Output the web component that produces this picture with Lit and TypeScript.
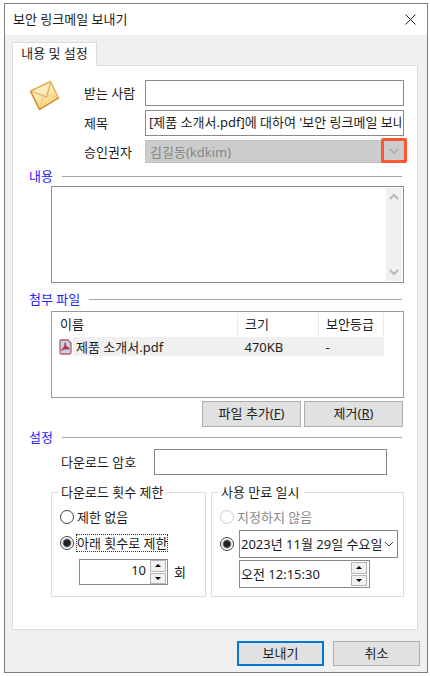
import { LitElement, html, css, svg } from "lit";
import { customElement, state } from "lit/decorators.js";

const envelope = svg`
  <defs>
    <linearGradient id="paper" x1="0" y1="0" x2="0.5" y2="1">
      <stop offset="0" stop-color="#fff6d8" />
      <stop offset="0.5" stop-color="#feeab4" />
      <stop offset="1" stop-color="#f8cf72" />
    </linearGradient>
  </defs>
  <path d="M1.5 11 L21.5 1.5 L29.5 18 L10.5 29.5 Z" fill="url(#paper)" stroke="#e6ae50" stroke-width="1.4" stroke-linejoin="round"/>
  <path d="M1.5 11 L10.5 29.5 L29.5 18" fill="none" stroke="#c98a3a" stroke-width="1.3" stroke-linejoin="round"/>
  <path d="M3 11.5 L17.5 17 L21.5 3" fill="none" stroke="#d9ab6c" stroke-width="1.2"/>
  <path d="M11 28 L14 16 M28 17.5 L18.5 15" fill="none" stroke="#edc98a" stroke-width="1"/>`;

@customElement("app-root")
export class AppRoot extends LitElement {
  @state() private limited = true;

  static styles = css`
    :host {
      display: block;
      box-sizing: border-box;
      padding: 3px 2px 3px 4px;
      background: #fff;
      color: #1c1c1c;
      font: 13px/18px "Noto Sans", "Noto Sans CJK KR", sans-serif;
    }
    *, *::before, *::after { box-sizing: border-box; }
    input, textarea, select, button {
      font: inherit;
      color: inherit;
      margin: 0;
      border-radius: 0;
      outline: none;
    }
    svg { display: block; }
    .window { border: 1px solid #7c7c7c; background: #f0f0f0; }
    .titlebar {
      display: flex;
      justify-content: space-between;
      align-items: center;
      height: 31px;
      padding: 0 11px 2px 8px;
      background: #fff;
    }
    .titlebar h1 { margin: 0; font: inherit; }
    .close { padding: 2px 0 0; border: 0; background: none; }
    .body { padding: 7px 9px 0 7px; }
    .tab {
      display: block;
      position: relative;
      z-index: 1;
      width: 85px;
      height: 24px;
      margin-bottom: -1px;
      padding: 0 0 4px;
      border: 1px solid #dcdcdc;
      border-bottom: 0;
      background: #fff;
    }
    .panel {
      padding: 14px 13px 32px 16px;
      border: 1px solid #dcdcdc;
      background: #fff;
    }
    .form {
      display: grid;
      grid-template-columns: 55px 61px 1fr;
      row-gap: 4px;
      align-items: center;
    }
    .mail { grid-row: span 3; align-self: start; }
    .field {
      width: 100%;
      min-width: 0;
      height: 26px;
      padding: 0 2px 4px 3px;
      border: 1px solid #8a8a8a;
      background: #fff;
    }
    .picker { position: relative; height: 23px; }
    .picker select {
      display: block;
      appearance: none;
      width: 100%;
      height: 23px;
      padding: 0 4px;
      border: 1px solid #c2c2c2;
      background: #ccc;
      color: #858585;
      opacity: 1;
    }
    .picker .mark {
      position: absolute;
      top: -2px;
      right: -3px;
      display: grid;
      place-items: center;
      width: 26px;
      height: 25px;
      border: 3px solid #ff5630;
      border-radius: 2px;
      pointer-events: none;
    }
    .heading {
      display: flex;
      align-items: center;
      gap: 9px;
      height: 20px;
      margin: 0 2px 0 0;
      font: inherit;
      color: #1f1fff;
    }
    .heading::after { content: ""; flex: 1; height: 1px; background: #a8a8a8; }
    .first { margin-top: 3px; }
    .second { margin-top: 6px; margin-bottom: 2px; }
    .third { margin-bottom: 2px; }
    .indent { margin-left: 22px; }
    .editor {
      display: flex;
      height: 97px;
      padding: 1px;
      border: 1px solid #8f8f8f;
    }
    .editor textarea { flex: 1; min-width: 0; border: 0; resize: none; overflow: hidden; }
    .scroll {
      display: flex;
      flex-direction: column;
      justify-content: space-between;
      align-items: center;
      width: 16px;
      padding: 3px 0;
      background: #f0f0f0;
    }
    .list { height: 87px; padding: 1px 19px 0 7px; border: 1px solid #9b9ba8; }
    table { width: 100%; border-collapse: collapse; table-layout: fixed; }
    th, td { padding: 0 0 0 7px; font-weight: inherit; text-align: left; white-space: nowrap; }
    th { height: 24px; padding-bottom: 2px; border-right: 1px solid #e8e8e8; }
    th:first-child { padding-left: 1px; }
    td { height: 19px; background: #f0f0f0; }
    td:first-child { padding: 0; background: linear-gradient(90deg, #fff 14px, #f0f0f0 14px); }
    .size { width: 81px; }
    .grade { width: 65px; }
    .file { display: flex; align-items: center; gap: 4px; }
    .actions { display: flex; justify-content: flex-end; gap: 3px; margin-top: 3px; padding-right: 1px; }
    .btn {
      width: 87px;
      height: 25px;
      padding: 0 0 2px;
      border: 1px solid #adadad;
      background: #e1e1e1;
    }
    .actions .btn { width: 99px; height: 26px; }
    .btn.primary { border: 2px solid #0078d7; }
    .password {
      display: grid;
      grid-template-columns: 93px 1fr;
      align-items: center;
      padding: 0 17px 0 32px;
    }
    .groups { display: grid; grid-template-columns: 155fr 193fr; gap: 5px; margin-top: 8px; }
    fieldset { min-width: 0; height: 114px; margin: 0; padding: 7px 5px 0 8px; border: 1px solid #dcdcdc; }
    legend { padding: 0 4px 0 2px; margin-left: -1px; }
    .option { display: flex; align-items: center; gap: 2px; height: 18px; }
    .option + .option { margin-top: 8px; }
    .option label { line-height: 16px; border: 1px solid transparent; white-space: nowrap; }
    .focus label { border: 1px dotted #333; }
    .off label { color: #888; }
    input[type="radio"] {
      appearance: none;
      flex: none;
      width: 14px;
      height: 14px;
      border: 1px solid #444;
      border-radius: 50%;
      background: #fff;
    }
    input[type="radio"]:checked { background: radial-gradient(circle, #222 3px, #fff 5px); }
    input[type="radio"]:disabled { border-color: #ccc; }
    .count { display: flex; align-items: center; gap: 6px; margin: 7px 0 0 19px; }
    .box {
      display: flex;
      align-items: center;
      width: 89px;
      height: 26px;
      padding-right: 1px;
      border: 1px solid #8a8a8a;
      background: #fff;
    }
    .box input { flex: 1; width: 0; min-width: 0; height: 22px; padding: 0 0 2px 1px; border: 0; background: none; }
    .box.count-box input { padding: 0 4px 4px 0; text-align: right; }
    .spin { display: grid; width: 16px; height: 24px; gap: 1px; }
    .spin button { display: grid; place-items: center; padding: 0; border: 1px solid #b5b5b5; background: #f0f0f0; }
    .when { display: grid; grid-template-columns: 14px 1fr; column-gap: 5px; row-gap: 2px; margin-top: 4px; align-items: center; }
    .box.date { width: 100%; height: 28px; padding-right: 2px; }
    .box.time { grid-column: 2; width: 131px; height: 28px; padding-right: 2px; }
    .drop { padding: 0; border: 0; background: none; }
    .footer { display: flex; justify-content: flex-end; gap: 9px; padding: 11px 7px 6px; }
  `;

  private chevron(color: string, up = false, weight = 1) {
    return html`<svg width="12" height="12" viewBox="0 0 12 12" aria-hidden="true">
      <path d=${up ? "M2 8 L6 4 L10 8" : "M2 4 L6 8 L10 4"} fill="none" stroke=${color} stroke-width=${weight} />
    </svg>`;
  }

  private spinner() {
    return html`<span class="spin">
      <button aria-label="증가"><svg width="6" height="3"><path d="M0 3 L3 0 L6 3Z" /></svg></button>
      <button aria-label="감소"><svg width="6" height="3"><path d="M0 0 L3 3 L6 0Z" /></svg></button>
    </span>`;
  }

  render() {
    return html`
      <main class="window">
        <header class="titlebar">
          <h1>보안 링크메일 보내기</h1>
          <button class="close" aria-label="닫기">
            <svg width="11" height="11"><path d="M.5 .5 L10.5 10.5 M10.5 .5 L.5 10.5" stroke="#222" /></svg>
          </button>
        </header>
        <div class="body">
          <button class="tab">내용 및 설정</button>
          <section class="panel">
            <div class="form">
              <svg class="mail" width="31" height="32" viewBox="0 0 31 32" aria-hidden="true">${envelope}</svg>
              <label for="to">받는 사람</label>
              <input class="field" id="to" type="text" />
              <label for="subject">제목</label>
              <input class="field" id="subject" type="text" .value=${"[제품 소개서.pdf]에 대하여 '보안 링크메일 보내기'"} />
              <label for="approver">승인권자</label>
              <div class="picker">
                <select id="approver" disabled><option>김길동(kdkim)</option></select>
                <span class="mark">${this.chevron("#a5a5a5", false, 1.4)}</span>
              </div>
            </div>

            <h2 class="heading first">내용</h2>
            <div class="editor indent">
              <textarea aria-label="내용"></textarea>
              <span class="scroll">
                ${this.chevron("#b8b8b8", true, 2)}${this.chevron("#b8b8b8", false, 2)}
              </span>
            </div>

            <h2 class="heading second">첨부 파일</h2>
            <div class="list indent">
              <table>
                <thead>
                  <tr><th>이름</th><th class="size">크기</th><th class="grade">보안등급</th></tr>
                </thead>
                <tbody>
                  <tr>
                    <td>
                      <span class="file">
                        <svg width="13" height="16" viewBox="0 0 13 16" aria-hidden="true">
                          <path d="M2 1 H9 L12 4 V13.5 Q12 15 10.5 15 H2.5 Q1 15 1 13.5 V2 Q1 1 2 1Z" fill="#b9d7ee" stroke="#c25562" stroke-width="1.3" />
                          <path d="M6.2 4.2 V7 L4 10.2 M6.2 7 L9.3 9.4 M3 11 L4.6 9.4 L9.8 9.6" fill="none" stroke="#c42f44" stroke-width="1.6" stroke-linecap="round" stroke-linejoin="round" />
                        </svg>
                        제품 소개서.pdf
                      </span>
                    </td>
                    <td>470KB</td>
                    <td>-</td>
                  </tr>
                </tbody>
              </table>
            </div>
            <div class="actions">
              <button class="btn">파일 추가(<u>F</u>)</button>
              <button class="btn">제거(<u>R</u>)</button>
            </div>

            <h2 class="heading third">설정</h2>
            <div class="password">
              <label for="password">다운로드 암호</label>
              <input class="field" id="password" type="text" />
            </div>
            <div class="groups indent">
              <fieldset>
                <legend>다운로드 횟수 제한</legend>
                <div class="option">
                  <input type="radio" name="limit" id="nolimit" .checked=${!this.limited} @change=${() => (this.limited = false)} />
                  <label for="nolimit">제한 없음</label>
                </div>
                <div class="option focus">
                  <input type="radio" name="limit" id="limit" .checked=${this.limited} @change=${() => (this.limited = true)} />
                  <label for="limit">아래 횟수로 제한</label>
                </div>
                <div class="count">
                  <span class="box count-box"><input id="count" type="text" .value=${"10"} />${this.spinner()}</span>
                  <label for="count">회</label>
                </div>
              </fieldset>
              <fieldset>
                <legend>사용 만료 일시</legend>
                <div class="option off">
                  <input type="radio" name="expiry" id="never" disabled />
                  <label for="never">지정하지 않음</label>
                </div>
                <div class="when">
                  <input type="radio" name="expiry" aria-label="만료 일시 지정" checked />
                  <span class="box date">
                    <input type="text" aria-label="만료 날짜" .value=${"2023년 11월 29일 수요일"} />
                    <button class="drop" aria-label="달력 열기">${this.chevron("#444")}</button>
                  </span>
                  <span class="box time">
                    <input type="text" aria-label="만료 시각" .value=${"오전 12:15:30"} />${this.spinner()}
                  </span>
                </div>
              </fieldset>
            </div>
          </section>
        </div>
        <footer class="footer">
          <button class="btn primary">보내기</button>
          <button class="btn">취소</button>
        </footer>
      </main>
    `;
  }
}
